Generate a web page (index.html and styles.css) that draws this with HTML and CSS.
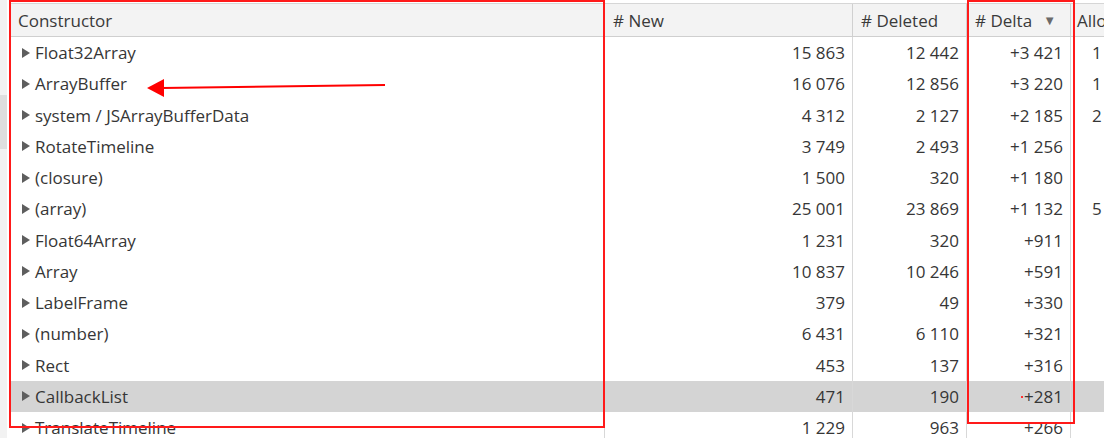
FILE: index.html
```html
<!DOCTYPE html>
<html>
<head>
<meta charset="utf-8">
<link rel="stylesheet" href="styles.css">
</head>
<body>
<div class="page">
  <div class="gutter"><div class="thumb"></div></div>
  <div class="grid">
    <div class="row head">
      <div class="cell">Constructor</div>
      <div class="cell">#&nbsp;New</div>
      <div class="cell">#&nbsp;Deleted</div>
      <div class="cell sorted">#&nbsp;Delta <span class="sort">▼</span></div>
      <div class="cell">Allo</div>
    </div>
    <div class="row"><div class="cell name"><span class="tri"></span>Float32Array</div><div class="cell num">15 863</div><div class="cell num">12 442</div><div class="cell num">+3 421</div><div class="cell num">1</div></div>
    <div class="row"><div class="cell name"><span class="tri"></span>ArrayBuffer</div><div class="cell num">16 076</div><div class="cell num">12 856</div><div class="cell num">+3 220</div><div class="cell num">1</div></div>
    <div class="row"><div class="cell name"><span class="tri"></span>system / JSArrayBufferData</div><div class="cell num">4 312</div><div class="cell num">2 127</div><div class="cell num">+2 185</div><div class="cell num">2</div></div>
    <div class="row"><div class="cell name"><span class="tri"></span>RotateTimeline</div><div class="cell num">3 749</div><div class="cell num">2 493</div><div class="cell num">+1 256</div><div class="cell num"></div></div>
    <div class="row"><div class="cell name"><span class="tri"></span>(closure)</div><div class="cell num">1 500</div><div class="cell num">320</div><div class="cell num">+1 180</div><div class="cell num"></div></div>
    <div class="row"><div class="cell name"><span class="tri"></span>(array)</div><div class="cell num">25 001</div><div class="cell num">23 869</div><div class="cell num">+1 132</div><div class="cell num">5</div></div>
    <div class="row"><div class="cell name"><span class="tri"></span>Float64Array</div><div class="cell num">1 231</div><div class="cell num">320</div><div class="cell num">+911</div><div class="cell num"></div></div>
    <div class="row"><div class="cell name"><span class="tri"></span>Array</div><div class="cell num">10 837</div><div class="cell num">10 246</div><div class="cell num">+591</div><div class="cell num"></div></div>
    <div class="row"><div class="cell name"><span class="tri"></span>LabelFrame</div><div class="cell num">379</div><div class="cell num">49</div><div class="cell num">+330</div><div class="cell num"></div></div>
    <div class="row"><div class="cell name"><span class="tri"></span>(number)</div><div class="cell num">6 431</div><div class="cell num">6 110</div><div class="cell num">+321</div><div class="cell num"></div></div>
    <div class="row"><div class="cell name"><span class="tri"></span>Rect</div><div class="cell num">453</div><div class="cell num">137</div><div class="cell num">+316</div><div class="cell num"></div></div>
    <div class="row selected"><div class="cell name"><span class="tri"></span>CallbackList</div><div class="cell num">471</div><div class="cell num">190</div><div class="cell num">+281</div><div class="cell num"></div></div>
    <div class="row"><div class="cell name"><span class="tri"></span>TranslateTimeline</div><div class="cell num">1 229</div><div class="cell num">963</div><div class="cell num">+266</div><div class="cell num"></div></div>
  </div>
  <div class="box box-a"></div>
  <div class="box box-b"></div>
  <svg class="arrow" width="260" height="30" viewBox="0 0 260 30">
    <line x1="15" y1="13" x2="238" y2="10" stroke="#ff0000" stroke-width="2"/>
    <polygon points="0,13 17,4 17,22" fill="#ff0000"/>
  </svg>
  <div class="dot"></div>
</div>
</body>
</html>
```

FILE: styles.css
```css
html, body {
  margin: 0;
  padding: 0;
  background: #ffffff;
}
body {
  font-family: "Open Sans", "Noto Sans", sans-serif;
  font-size: 17px;
  color: #363636;
  overflow: hidden;
}
.page {
  position: relative;
  display: flex;
  width: 1104px;
  height: 438px;
  overflow: hidden;
}
.gutter {
  width: 7px;
  margin-right: 3px;
  background: #f2f2f2;
  flex: none;
  display: flex;
  flex-direction: column;
}
.thumb {
  margin-top: 95px;
  height: 54px;
  background: #dedede;
}
.grid {
  flex: 1;
  margin-top: 3px;
  display: flex;
  flex-direction: column;
}
.row {
  display: grid;
  grid-template-columns: 595px 248px 114px 104px 1fr;
  height: 31.25px;
  flex: none;
}
.row.head {
  height: 32px;
  background: #f3f3f3;
  border-top: 1px solid #d6d6d6;
  border-bottom: 1px solid #cfcfcf;
  color: #3a3a3a;
}
.row.selected {
  background: #d4d4d4;
}
.cell {
  display: flex;
  align-items: center;
  border-right: 1px solid #d8d8d8;
  padding: 0 8px;
  white-space: nowrap;
  overflow: hidden;
  min-width: 0;
}
.row.head .cell {
  border-right-color: #d0d0d0;
}
.cell:last-child {
  border-right: none;
  padding: 0 6px;
}
.cell.num {
  justify-content: flex-end;
  padding-right: 7px;
}
.cell.num:last-child {
  justify-content: flex-start;
  padding-left: 21px;
}
.cell.name {
  padding-left: 12px;
}
.sorted {
  justify-content: space-between;
}
.sort {
  font-size: 13px;
  color: #6a6a6a;
  padding-right: 6px;
}
.tri {
  width: 0;
  height: 0;
  border-top: 5px solid transparent;
  border-bottom: 5px solid transparent;
  border-left: 8px solid #5e5e5e;
  margin-right: 5px;
  flex: none;
}
.box {
  position: absolute;
  border: 2px solid #ff1a1a;
  pointer-events: none;
}
.box-a {
  left: 9px;
  top: 0;
  width: 592px;
  height: 424px;
}
.box-b {
  left: 967px;
  top: 0;
  width: 104px;
  height: 420px;
}
.arrow {
  position: absolute;
  left: 147px;
  top: 75px;
}
.dot {
  position: absolute;
  left: 1021px;
  top: 396px;
  width: 2px;
  height: 2px;
  background: #ff3030;
}
```
